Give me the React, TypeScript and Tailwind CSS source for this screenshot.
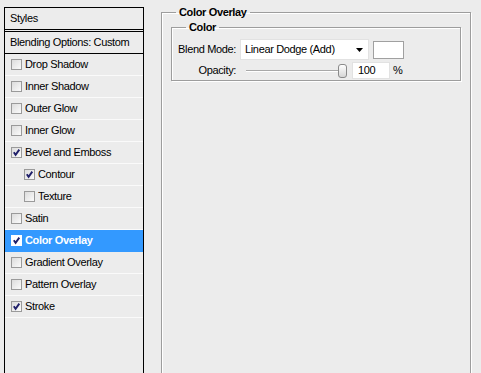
import React from 'react';

interface StyleRow {
  label: string;
  checked: boolean;
  indent?: boolean;
  active?: boolean;
}

const rows: StyleRow[] = [
  { label: 'Drop Shadow', checked: false },
  { label: 'Inner Shadow', checked: false },
  { label: 'Outer Glow', checked: false },
  { label: 'Inner Glow', checked: false },
  { label: 'Bevel and Emboss', checked: true },
  { label: 'Contour', checked: true, indent: true },
  { label: 'Texture', checked: false, indent: true },
  { label: 'Satin', checked: false },
  { label: 'Color Overlay', checked: true, active: true },
  { label: 'Gradient Overlay', checked: false },
  { label: 'Pattern Overlay', checked: false },
  { label: 'Stroke', checked: true },
];

const CheckBox = ({ checked, active }: { checked: boolean; active?: boolean }) => (
  <div
    className={`w-[11px] h-[11px] border flex-shrink-0 flex items-center justify-center ${
      active ? 'border-white bg-white' : 'border-[#9a9a9a] bg-gradient-to-br from-[#dcdcdc] to-[#fbfbfb]'
    }`}
  >
    {checked && (
      <svg width="9" height="9" viewBox="0 0 9 9">
        <path d="M1.8 4.2 L3.6 6.8 L7.3 1.6" fill="none" stroke="#20206a" strokeWidth="1.9" />
      </svg>
    )}
  </div>
);

export default function App() {
  return (
    <div
      className="w-[481px] h-[373px] overflow-hidden bg-[#ececec] flex text-[11px] tracking-[-0.35px] text-black"
      style={{ fontFamily: '"Liberation Sans", Arial, sans-serif' }}
    >
      {/* Styles list */}
      <div className="ml-[4px] mt-[7px] w-[140px] h-[380px] border border-black flex-shrink-0 flex flex-col">
        <div className="h-[22px] flex items-center pl-[5px] border-b border-black">Styles</div>
        <div className="h-[2px] border-b border-black" />
        <div className="h-[22px] flex items-center pl-[5px] border-b border-black">Blending Options: Custom</div>
        {rows.map((row) => (
          <div
            key={row.label}
            className={`h-[22px] flex items-center gap-[3px] border-b ${
              row.indent ? 'pl-[19px]' : 'pl-[6px]'
            } ${row.active ? 'bg-[#3399ff] border-[#3399ff] text-white font-bold' : 'border-[#fafafa]'}`}
          >
            <CheckBox checked={row.checked} active={row.active} />
            <span>{row.label}</span>
          </div>
        ))}
      </div>

      {/* Settings */}
      <fieldset className="ml-[17px] mt-[5px] w-[310px] h-[380px] border border-[#9d9d9d] shadow-[inset_1px_1px_0_#fff,1px_1px_0_#fff] px-[9px] flex-shrink-0">
        <legend className="ml-[5px] px-[3px] font-bold leading-[14px]">Color Overlay</legend>
        <fieldset className="mt-[1px] h-[61px] border border-[#9d9d9d] shadow-[inset_1px_1px_0_#fff,1px_1px_0_#fff]">
          <legend className="ml-[14px] px-[3px] font-bold leading-[14px]">Color</legend>
          <div className="flex items-center mt-[5px]">
            <span className="w-[66px] text-right pr-[2px]">Blend Mode:</span>
            <div className="ml-[2px] w-[129px] h-[21px] bg-white border border-[#e2e2e2] flex items-center justify-between pl-[4px] pr-[4px]">
              <span>Linear Dodge (Add)</span>
              <svg width="7" height="4" viewBox="0 0 7 4" className="mr-[1px]">
                <path d="M0 0 H7 L3.5 4 Z" fill="#000" />
              </svg>
            </div>
            <div className="ml-[4px] w-[31px] h-[18px] bg-white border border-[#a0a0a0]" />
          </div>
          <div className="flex items-center mt-[2px]">
            <span className="w-[66px] text-right pr-[2px]">Opacity:</span>
            <div className="relative ml-[8px] w-[101px] h-[16px] flex items-center">
              <div className="w-full h-[2px] border-t border-[#a8a8a8] border-b border-b-white" />
              <div className="absolute right-0 top-[1px] w-[9px] h-[14px] rounded-[3px] border border-[#8a8a8a] bg-gradient-to-b from-white to-[#d6d6d6]" />
            </div>
            <div className="ml-[5px] w-[38px] h-[17px] bg-white border border-[#e2e2e2] flex items-center pl-[5px]">100</div>
            <span className="ml-[3px]">%</span>
          </div>
        </fieldset>
      </fieldset>
    </div>
  );
}
